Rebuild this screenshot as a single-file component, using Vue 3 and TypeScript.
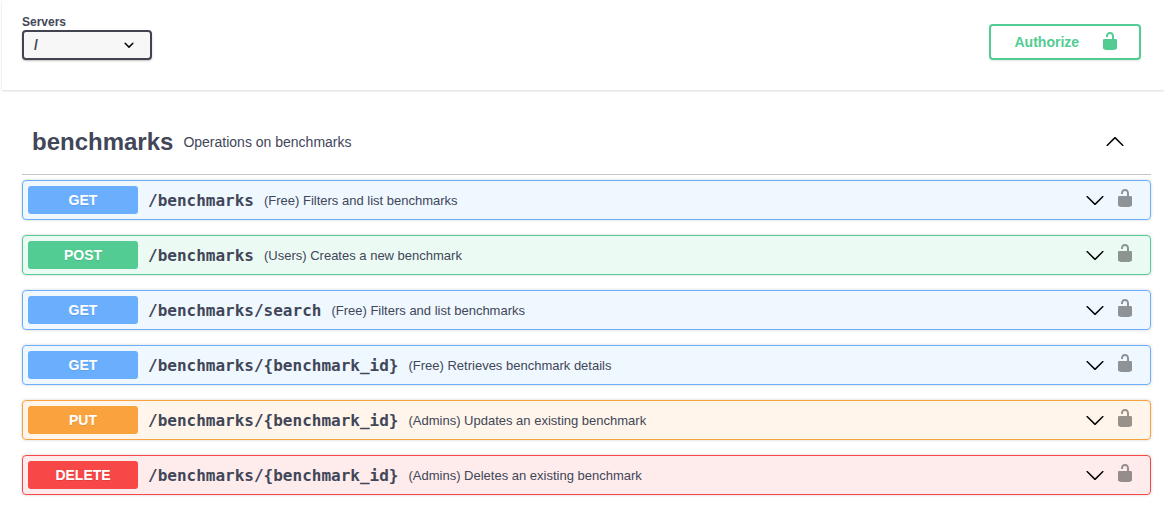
<script setup lang="ts">
interface Operation {
  method: string
  kind: string
  path: string
  summary: string
}

const lockOpen =
  'M15.8 8H14V5.6C14 2.703 12.665 1 10 1 7.334 1 6 2.703 6 5.6V6h2v-.801C8 3.754 8.797 3 10 3c1.203 0 2 .754 2 2.199V8H4c-.553 0-1 .646-1 1.199V17c0 .549.428 1.139.951 1.307l1.197.387C5.672 18.861 6.55 19 7.1 19h5.8c.549 0 1.428-.139 1.951-.307l1.196-.387c.524-.167.953-.757.953-1.306V9.199C17 8.646 16.352 8 15.8 8z'
const arrowDown =
  'M17.418 6.109c.272-.268.709-.268.979 0s.271.701 0 .969l-7.908 7.83c-.27.268-.707.268-.979 0l-7.908-7.83c-.27-.268-.27-.701 0-.969.271-.268.709-.268.979 0L10 13.25l7.418-7.141z'

const operations: Operation[] = [
  { method: 'GET', kind: 'get', path: '/benchmarks', summary: '(Free) Filters and list benchmarks' },
  { method: 'POST', kind: 'post', path: '/benchmarks', summary: '(Users) Creates a new benchmark' },
  { method: 'GET', kind: 'get', path: '/benchmarks/search', summary: '(Free) Filters and list benchmarks' },
  { method: 'GET', kind: 'get', path: '/benchmarks/{benchmark_id}', summary: '(Free) Retrieves benchmark details' },
  { method: 'PUT', kind: 'put', path: '/benchmarks/{benchmark_id}', summary: '(Admins) Updates an existing benchmark' },
  { method: 'DELETE', kind: 'delete', path: '/benchmarks/{benchmark_id}', summary: '(Admins) Deletes an existing benchmark' }
]
</script>

<template>
  <div class="page">
    <header class="schemes">
      <div class="servers">
        <span class="servers-title">Servers</span>
        <div class="select">
          <span>/</span>
          <svg class="select-arrow" viewBox="0 0 20 20"><path d="M13.418 7.859a.695.695 0 0 1 .978 0 .68.68 0 0 1 0 .969l-3.908 3.83a.697.697 0 0 1-.979 0l-3.908-3.83a.68.68 0 0 1 0-.969.695.695 0 0 1 .978 0L10 11l3.418-3.141z" /></svg>
        </div>
      </div>
      <button class="authorize" type="button">
        <span>Authorize</span>
        <svg class="authorize-lock" viewBox="0 0 20 20"><path :d="lockOpen" /></svg>
      </button>
    </header>

    <section class="tag-section">
      <div class="tag">
        <h3 class="tag-name">benchmarks</h3>
        <small class="tag-desc">Operations on benchmarks</small>
        <svg class="tag-arrow" viewBox="0 0 20 20"><path :d="arrowDown" /></svg>
      </div>

      <div
        v-for="(op, index) in operations"
        :key="index"
        class="opblock"
        :class="'opblock-' + op.kind"
      >
        <span class="method">{{ op.method }}</span>
        <span class="path">{{ op.path }}</span>
        <span class="summary">{{ op.summary }}</span>
        <svg class="row-arrow" viewBox="0 0 20 20"><path :d="arrowDown" /></svg>
        <svg class="row-lock" viewBox="0 0 20 20"><path :d="lockOpen" /></svg>
      </div>
    </section>
  </div>
</template>

<style>
html,
body {
  margin: 0;
  background: #fff;
}
</style>

<style scoped>
* {
  box-sizing: border-box;
}

.page {
  width: 1164px;
  height: 512px;
  overflow: hidden;
  font-family: "Liberation Sans", Arial, sans-serif;
  color: #414658;
}

.schemes {
  display: flex;
  justify-content: space-between;
  align-items: flex-start;
  height: 90px;
  margin-left: 2px;
  padding: 0 23px 0 20px;
  background: #fff;
  box-shadow: 0 1px 2px 0 rgba(0, 0, 0, 0.15);
}

.servers {
  display: flex;
  flex-direction: column;
  padding-top: 15px;
}

.servers-title {
  font-size: 12px;
  line-height: 14px;
  font-weight: 700;
  margin-bottom: 1px;
}

.select {
  display: flex;
  align-items: center;
  justify-content: space-between;
  width: 130px;
  height: 30px;
  padding: 0 11px 0 10px;
  border: 2px solid #41444e;
  border-radius: 4px;
  background: #f7f7f7;
  box-shadow: 0 1px 2px 0 rgba(0, 0, 0, 0.25);
  font-size: 14px;
  font-weight: 700;
}

.select-arrow {
  width: 20px;
  height: 20px;
  fill: #000;
}

.authorize {
  display: flex;
  align-items: center;
  justify-content: flex-start;
  width: 152px;
  height: 36px;
  margin-top: 24px;
  padding: 0 0 0 23.5px;
  border: 2px solid #52cc93;
  border-radius: 4px;
  background: #fff;
  box-shadow: 0 1px 2px rgba(0, 0, 0, 0.1);
  color: #52cc93;
  font-family: inherit;
  font-size: 14px;
  font-weight: 700;
}

.authorize-lock {
  width: 20px;
  height: 20px;
  margin-left: 20.5px;
  margin-bottom: 2px;
  fill: #52cc93;
}

.tag-section {
  padding: 0 13px 0 22px;
}

.tag {
  display: flex;
  align-items: center;
  height: 85px;
  padding: 20px 10px 0 10px;
  margin-bottom: 5px;
  border-bottom: 1px solid rgba(59, 65, 81, 0.3);
}

.tag-name {
  margin: 0;
  font-size: 24px;
  line-height: 32px;
  font-weight: 700;
}

.tag-desc {
  margin-left: 10px;
  font-size: 14px;
  line-height: 20px;
}

.tag-arrow {
  width: 20px;
  height: 20px;
  margin-left: auto;
  margin-right: 16px;
  transform: rotate(180deg);
}

.opblock {
  display: flex;
  align-items: center;
  height: 40px;
  margin-bottom: 15px;
  padding: 0 15px 0 5px;
  border: 1px solid;
  border-radius: 4px;
  box-shadow: 0 0 3px rgba(0, 0, 0, 0.19);
}

.method {
  flex: none;
  width: 110px;
  height: 28px;
  border-radius: 3px;
  color: #fff;
  font-size: 14px;
  line-height: 28px;
  font-weight: 700;
  text-align: center;
  text-shadow: 0 1px 0 rgba(0, 0, 0, 0.1);
}

.path {
  margin-left: 10px;
  padding-right: 10px;
  font-family: "DejaVu Sans Mono", monospace;
  font-size: 16px;
  font-weight: 600;
  white-space: nowrap;
}

.summary {
  font-size: 13px;
  white-space: nowrap;
}

.row-arrow {
  width: 20px;
  height: 20px;
  margin-left: auto;
}

.row-lock {
  width: 20px;
  height: 20px;
  margin-left: 10px;
  margin-bottom: 4px;
  fill: #000;
  opacity: 0.4;
}

.opblock-get {
  border-color: #6aaffe;
  background: rgba(97, 175, 254, 0.1);
}

.opblock-get .method {
  background: #6aaffe;
}

.opblock-post {
  border-color: #52cc93;
  background: rgba(73, 204, 144, 0.1);
}

.opblock-post .method {
  background: #52cc93;
}

.opblock-put {
  border-color: #faa33e;
  background: rgba(252, 161, 48, 0.1);
}

.opblock-put .method {
  background: #faa33e;
}

.opblock-delete {
  border-color: #f74747;
  background: rgba(249, 62, 62, 0.1);
}

.opblock-delete .method {
  background: #f74747;
}
</style>
